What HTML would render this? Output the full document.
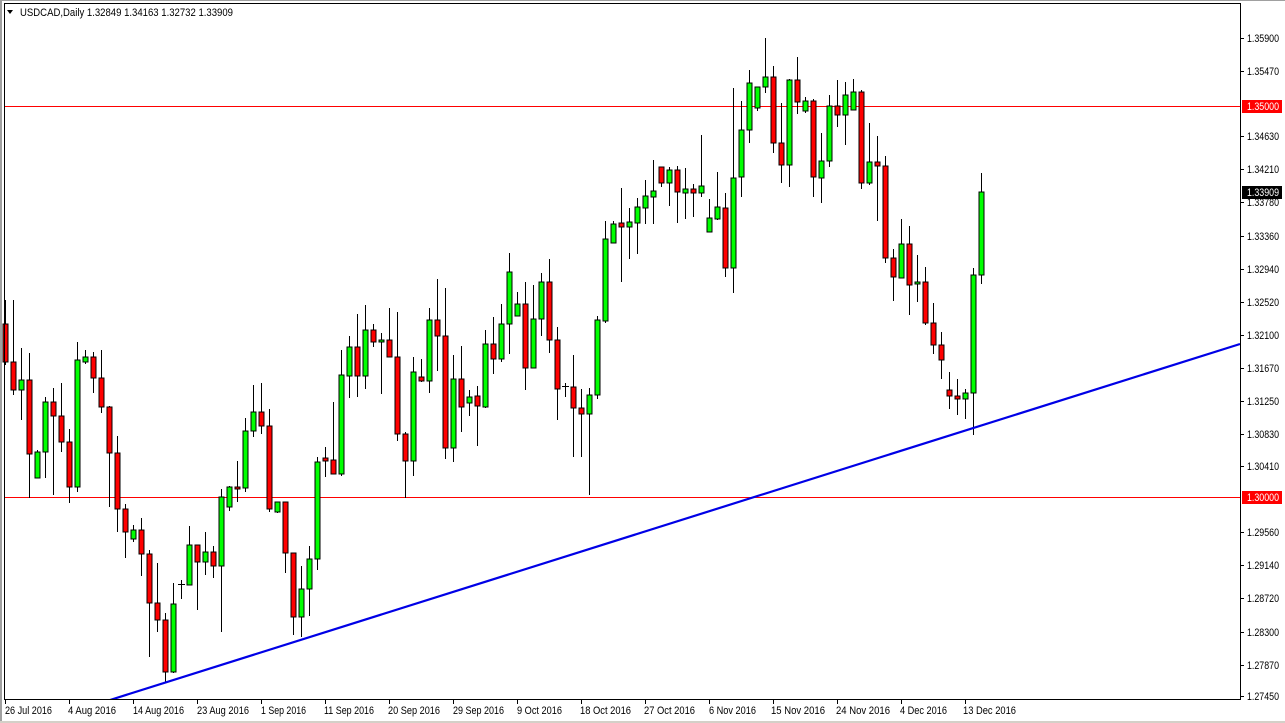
<!DOCTYPE html>
<html><head><meta charset="utf-8"><style>
html,body{margin:0;padding:0;background:#fff;width:1285px;height:723px;overflow:hidden}
svg{display:block}
text{font-family:"Liberation Sans",Tahoma,sans-serif;font-size:11px;fill:#000}
</style></head><body>
<svg width="1285" height="723" viewBox="0 0 1285 723" xmlns="http://www.w3.org/2000/svg">
<rect x="0" y="0" width="1285" height="723" fill="#fff"/>
<rect x="0" y="0" width="1285" height="1" fill="#a0a0a0"/>
<rect x="0" y="0" width="2" height="723" fill="#a0a0a0"/>
<rect x="0" y="721" width="1285" height="2" fill="#d4d0c8"/>
<defs><clipPath id="c"><rect x="5" y="4" width="1235" height="695"/></clipPath></defs>
<path d="M7 10 L13 10 L10 14 Z" fill="#000"/>
<text x="20" y="16" textLength="213" lengthAdjust="spacingAndGlyphs">USDCAD,Daily  1.32849 1.34163 1.32732 1.33909</text>
<rect x="5" y="106" width="1235" height="1" fill="#ff0000"/>
<rect x="5" y="497" width="1235" height="1" fill="#ff0000"/>
<path shape-rendering="crispEdges" stroke="#000" stroke-width="1" fill="none" d="
M5.5 300V365M13.5 300V395M21.5 348V420M29.5 353V498M37.5 450V478M45.5 397V478M53.5 388V495M61.5 383V452M69.5 429V503M77.5 342V492
M85.5 350V364M93.5 352V393M101.5 350V413M109.5 406V507M117.5 436V532M125.5 504V558M133.5 525V542M141.5 518V576M149.5 550V657M157.5 563V632
M165.5 613V682M173.5 583V673M181.5 580V599M189.5 526V585M197.5 545V610M205.5 532V575M213.5 546V578M221.5 489V632M229.5 486V511M237.5 461V502
M245.5 418V492M253.5 385V437M261.5 383V434M269.5 409V512M277.5 502V513M285.5 502V573M293.5 553V635M301.5 566V637M309.5 546V616M317.5 457V570
M325.5 447V477M333.5 402V474M341.5 350V476M349.5 336V398M357.5 314V397M365.5 305V389M373.5 324V347M381.5 333V394M389.5 308V357M397.5 312V441
M405.5 432V498M413.5 357V476M421.5 359V382M429.5 308V393M437.5 279V371M445.5 288V459M453.5 355V462M461.5 346V432M469.5 390V416M477.5 386V446
M485.5 330V408M493.5 317V374M501.5 304V362M509.5 253V354M517.5 292V316M525.5 282V390M533.5 285V368M541.5 273V336M549.5 259V353M557.5 327V420
M565.5 383V397M573.5 355V457M581.5 389V457M589.5 388V495M597.5 316V399M605.5 221V323M613.5 221V243M621.5 188V282M629.5 208V259M637.5 198V254
M645.5 180V224M653.5 160V224M661.5 167V187M669.5 167V206M677.5 166V223M685.5 168V219M693.5 184V217M701.5 135V197M709.5 199V232M717.5 172V220
M725.5 193V277M733.5 88V293M741.5 101V197M749.5 70V143M757.5 87V111M765.5 38V93M773.5 66V153M781.5 103V183M789.5 79V187M797.5 57V114
M805.5 97V113M813.5 99V197M821.5 133V203M829.5 95V167M837.5 80V127M845.5 82V145M853.5 79V110M861.5 90V189M869.5 123V185M877.5 136V221
M885.5 156V263M893.5 249V301M901.5 219V278M909.5 226V315M917.5 255V302M925.5 267V325M933.5 303V354M941.5 332V379M949.5 372V409M957.5 379V415
M965.5 389V419M973.5 268V435M981.5 173V284
M178 584.5H185M562 386.5H569"/>
<g fill="#00ff00" stroke="#000" stroke-width="1" shape-rendering="crispEdges">
<rect x="19" y="380" width="5" height="10"/><rect x="35" y="452" width="5" height="26"/><rect x="43" y="402" width="5" height="50"/>
<rect x="75" y="360" width="5" height="127"/><rect x="83" y="357" width="5" height="5"/><rect x="131" y="530" width="5" height="9"/>
<rect x="171" y="604" width="5" height="68"/><rect x="187" y="545" width="5" height="40"/><rect x="203" y="552" width="5" height="10"/>
<rect x="219" y="497" width="5" height="69"/><rect x="227" y="487" width="5" height="20"/><rect x="243" y="431" width="5" height="57"/>
<rect x="251" y="412" width="5" height="19"/><rect x="275" y="502" width="5" height="10"/><rect x="299" y="589" width="5" height="28"/>
<rect x="307" y="559" width="5" height="30"/><rect x="315" y="462" width="5" height="97"/><rect x="339" y="375" width="5" height="99"/>
<rect x="347" y="347" width="5" height="29"/><rect x="363" y="330" width="5" height="46"/><rect x="379" y="340" width="5" height="2"/>
<rect x="411" y="372" width="5" height="89"/><rect x="427" y="320" width="5" height="61"/><rect x="451" y="379" width="5" height="69"/>
<rect x="467" y="397" width="5" height="6"/><rect x="483" y="344" width="5" height="63"/><rect x="499" y="324" width="5" height="35"/>
<rect x="507" y="272" width="5" height="52"/><rect x="515" y="304" width="5" height="12"/><rect x="531" y="319" width="5" height="49"/>
<rect x="539" y="282" width="5" height="37"/><rect x="587" y="395" width="5" height="19"/><rect x="595" y="320" width="5" height="75"/>
<rect x="603" y="239" width="5" height="82"/><rect x="611" y="224" width="5" height="19"/><rect x="627" y="222" width="5" height="5"/>
<rect x="635" y="207" width="5" height="16"/><rect x="643" y="196" width="5" height="12"/><rect x="651" y="191" width="5" height="6"/>
<rect x="667" y="170" width="5" height="13"/><rect x="683" y="189" width="5" height="4"/><rect x="699" y="186" width="5" height="7"/>
<rect x="707" y="218" width="5" height="14"/><rect x="715" y="207" width="5" height="12"/><rect x="731" y="178" width="5" height="90"/>
<rect x="739" y="130" width="5" height="47"/><rect x="747" y="83" width="5" height="47"/><rect x="755" y="87" width="5" height="21"/>
<rect x="763" y="77" width="5" height="10"/><rect x="787" y="80" width="5" height="85"/><rect x="803" y="101" width="5" height="10"/>
<rect x="819" y="161" width="5" height="17"/><rect x="827" y="106" width="5" height="55"/><rect x="843" y="95" width="5" height="20"/>
<rect x="851" y="92" width="5" height="18"/><rect x="867" y="162" width="5" height="21"/><rect x="899" y="244" width="5" height="34"/>
<rect x="915" y="282" width="5" height="2"/><rect x="963" y="393" width="5" height="6"/><rect x="971" y="275" width="5" height="118"/>
<rect x="979" y="192" width="5" height="83"/>
</g>
<g fill="#ff0000" stroke="#000" stroke-width="1" shape-rendering="crispEdges">
<rect x="3" y="324" width="5" height="38"/><rect x="11" y="362" width="5" height="28"/><rect x="27" y="380" width="5" height="74"/>
<rect x="51" y="402" width="5" height="14"/><rect x="59" y="416" width="5" height="26"/><rect x="67" y="442" width="5" height="45"/>
<rect x="91" y="357" width="5" height="21"/><rect x="99" y="378" width="5" height="29"/><rect x="107" y="407" width="5" height="46"/>
<rect x="115" y="453" width="5" height="56"/><rect x="123" y="509" width="5" height="23"/><rect x="139" y="530" width="5" height="24"/>
<rect x="147" y="554" width="5" height="49"/><rect x="155" y="603" width="5" height="17"/><rect x="163" y="620" width="5" height="52"/>
<rect x="195" y="545" width="5" height="17"/><rect x="211" y="552" width="5" height="14"/><rect x="235" y="487" width="5" height="2"/>
<rect x="259" y="412" width="5" height="14"/><rect x="267" y="426" width="5" height="83"/><rect x="283" y="502" width="5" height="51"/>
<rect x="291" y="553" width="5" height="64"/><rect x="323" y="458" width="5" height="3"/><rect x="331" y="460" width="5" height="14"/>
<rect x="355" y="347" width="5" height="29"/><rect x="371" y="330" width="5" height="12"/><rect x="387" y="340" width="5" height="17"/>
<rect x="395" y="357" width="5" height="77"/><rect x="403" y="434" width="5" height="27"/><rect x="419" y="377" width="5" height="4"/>
<rect x="435" y="320" width="5" height="16"/><rect x="443" y="336" width="5" height="112"/><rect x="459" y="379" width="5" height="28"/>
<rect x="475" y="396" width="5" height="10"/><rect x="491" y="344" width="5" height="15"/><rect x="523" y="304" width="5" height="64"/>
<rect x="547" y="282" width="5" height="58"/><rect x="555" y="340" width="5" height="49"/><rect x="571" y="387" width="5" height="21"/>
<rect x="579" y="408" width="5" height="6"/><rect x="619" y="223" width="5" height="4"/><rect x="659" y="167" width="5" height="16"/>
<rect x="675" y="170" width="5" height="22"/><rect x="691" y="189" width="5" height="4"/><rect x="723" y="208" width="5" height="60"/>
<rect x="771" y="77" width="5" height="66"/><rect x="779" y="143" width="5" height="22"/><rect x="795" y="80" width="5" height="22"/>
<rect x="811" y="101" width="5" height="76"/><rect x="835" y="106" width="5" height="9"/><rect x="859" y="92" width="5" height="91"/>
<rect x="875" y="162" width="5" height="4"/><rect x="883" y="166" width="5" height="92"/><rect x="891" y="258" width="5" height="19"/>
<rect x="907" y="244" width="5" height="41"/><rect x="923" y="282" width="5" height="41"/><rect x="931" y="323" width="5" height="22"/>
<rect x="939" y="345" width="5" height="15"/><rect x="947" y="390" width="5" height="6"/><rect x="955" y="396" width="5" height="3"/>
</g>
<line x1="110" y1="700" x2="1240" y2="344" stroke="#0000e6" stroke-width="2.2" clip-path="url(#c)"/>
<rect x="4.5" y="3.5" width="1236" height="696" fill="none" stroke="#000" stroke-width="1"/>
<path stroke="#000" stroke-width="1" d="M1240 38.5h4M1240 71.5h4M1240 136.5h4M1240 169.5h4M1240 202.5h4M1240 236.5h4M1240 269.5h4M1240 302.5h4M1240 335.5h4M1240 368.5h4M1240 401.5h4M1240 434.5h4M1240 466.5h4M1240 532.5h4M1240 565.5h4M1240 598.5h4M1240 632.5h4M1240 665.5h4M1240 696.5h4"/>
<g>
<text x="1247" y="42" textLength="32" lengthAdjust="spacingAndGlyphs">1.35900</text><text x="1247" y="75" textLength="32" lengthAdjust="spacingAndGlyphs">1.35470</text>
<text x="1247" y="140" textLength="32" lengthAdjust="spacingAndGlyphs">1.34630</text><text x="1247" y="173" textLength="32" lengthAdjust="spacingAndGlyphs">1.34210</text>
<text x="1247" y="206" textLength="32" lengthAdjust="spacingAndGlyphs">1.33780</text><text x="1247" y="240" textLength="32" lengthAdjust="spacingAndGlyphs">1.33360</text>
<text x="1247" y="273" textLength="32" lengthAdjust="spacingAndGlyphs">1.32940</text><text x="1247" y="306" textLength="32" lengthAdjust="spacingAndGlyphs">1.32520</text>
<text x="1247" y="339" textLength="32" lengthAdjust="spacingAndGlyphs">1.32100</text><text x="1247" y="372" textLength="32" lengthAdjust="spacingAndGlyphs">1.31670</text>
<text x="1247" y="405" textLength="32" lengthAdjust="spacingAndGlyphs">1.31250</text><text x="1247" y="438" textLength="32" lengthAdjust="spacingAndGlyphs">1.30830</text>
<text x="1247" y="470" textLength="32" lengthAdjust="spacingAndGlyphs">1.30410</text><text x="1247" y="536" textLength="32" lengthAdjust="spacingAndGlyphs">1.29560</text>
<text x="1247" y="569" textLength="32" lengthAdjust="spacingAndGlyphs">1.29140</text><text x="1247" y="602" textLength="32" lengthAdjust="spacingAndGlyphs">1.28720</text>
<text x="1247" y="636" textLength="32" lengthAdjust="spacingAndGlyphs">1.28300</text><text x="1247" y="669" textLength="32" lengthAdjust="spacingAndGlyphs">1.27870</text>
<text x="1247" y="700" textLength="32" lengthAdjust="spacingAndGlyphs">1.27450</text>
</g>
<rect x="1242" y="100" width="40" height="13" fill="#ff0000"/>
<text x="1247" y="110" textLength="32" lengthAdjust="spacingAndGlyphs" style="fill:#fff">1.35000</text>
<rect x="1242" y="186" width="40" height="13" fill="#000"/>
<text x="1247" y="196" textLength="32" lengthAdjust="spacingAndGlyphs" style="fill:#fff">1.33909</text>
<rect x="1242" y="491" width="40" height="13" fill="#ff0000"/>
<text x="1247" y="501" textLength="32" lengthAdjust="spacingAndGlyphs" style="fill:#fff">1.30000</text>
<path stroke="#000" stroke-width="1" d="M5.5 700v4M69.5 700v4M133.5 700v4M197.5 700v4M261.5 700v4M325.5 700v4M389.5 700v4M453.5 700v4M517.5 700v4M581.5 700v4M645.5 700v4M709.5 700v4M773.5 700v4M837.5 700v4M901.5 700v4M965.5 700v4"/>
<g>
<text x="5" y="714" textLength="47" lengthAdjust="spacingAndGlyphs">26 Jul 2016</text><text x="68" y="714" textLength="48" lengthAdjust="spacingAndGlyphs">4 Aug 2016</text>
<text x="133" y="714" textLength="51" lengthAdjust="spacingAndGlyphs">14 Aug 2016</text><text x="197" y="714" textLength="52" lengthAdjust="spacingAndGlyphs">23 Aug 2016</text>
<text x="261" y="714" textLength="45" lengthAdjust="spacingAndGlyphs">1 Sep 2016</text><text x="324" y="714" textLength="50" lengthAdjust="spacingAndGlyphs">11 Sep 2016</text>
<text x="388" y="714" textLength="52" lengthAdjust="spacingAndGlyphs">20 Sep 2016</text><text x="453" y="714" textLength="51" lengthAdjust="spacingAndGlyphs">29 Sep 2016</text>
<text x="517" y="714" textLength="45" lengthAdjust="spacingAndGlyphs">9 Oct 2016</text><text x="580" y="714" textLength="51" lengthAdjust="spacingAndGlyphs">18 Oct 2016</text>
<text x="644" y="714" textLength="51" lengthAdjust="spacingAndGlyphs">27 Oct 2016</text><text x="709" y="714" textLength="47" lengthAdjust="spacingAndGlyphs">6 Nov 2016</text>
<text x="771" y="714" textLength="54" lengthAdjust="spacingAndGlyphs">15 Nov 2016</text><text x="836" y="714" textLength="54" lengthAdjust="spacingAndGlyphs">24 Nov 2016</text>
<text x="900" y="714" textLength="47" lengthAdjust="spacingAndGlyphs">4 Dec 2016</text><text x="963" y="714" textLength="53" lengthAdjust="spacingAndGlyphs">13 Dec 2016</text>
</g>
</svg>
</body></html>
